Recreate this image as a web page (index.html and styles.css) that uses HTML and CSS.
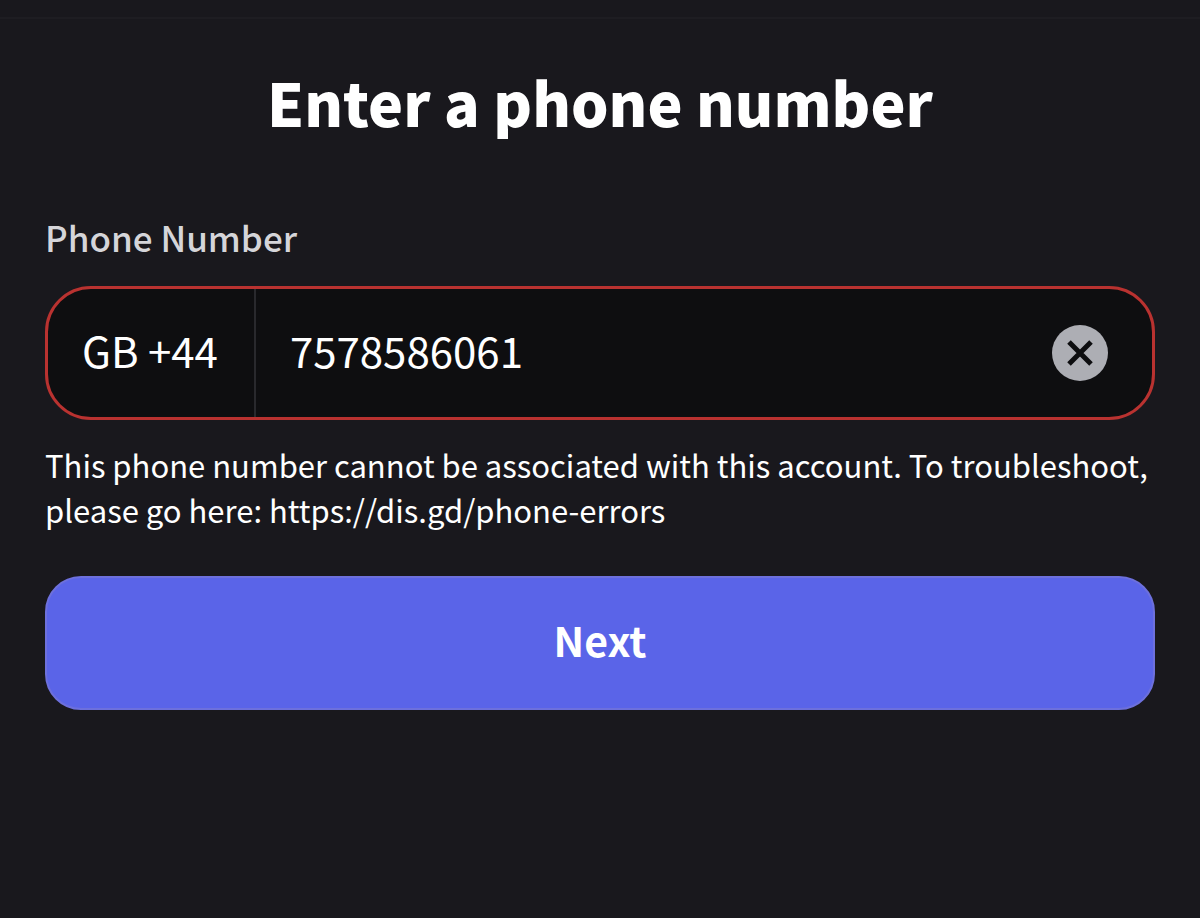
FILE: index.html
```
<!DOCTYPE html>
<html lang="en">
<head>
    <meta charset="UTF-8">
    <meta name="viewport" content="width=device-width, initial-scale=1.0">
    <title>Enter a phone number</title>
    <link rel="stylesheet" href="styles.css">
</head>
<body>
    <header class="topbar"></header>

    <main class="screen">
        <h1 class="title">Enter a phone number</h1>

        <form class="phone-form">
            <label class="label" for="phone">Phone Number</label>
            <div class="field">
                <button type="button" class="country">GB +44</button>
                <input type="tel" class="phone" id="phone" name="phone" value="7578586061" aria-describedby="phoneError">
                <button type="button" class="clear" aria-label="Clear">
                    <svg viewBox="0 0 56 56" width="56" height="56">
                        <circle cx="28" cy="28" r="28" fill="#adaeb4"/>
                        <path d="M17 17L39 39M39 17L17 39" stroke="#0d0d0f" stroke-width="5"/>
                    </svg>
                </button>
            </div>
            <p class="error" id="phoneError">This phone number cannot be associated with this account. To troubleshoot, please go here: https://dis.gd/phone-errors</p>
            <button type="submit" class="next">Next</button>
        </form>
    </main>
</body>
</html>
```
FILE: styles.css
```
* {
    box-sizing: border-box;
}
body {
    margin: 0;
    min-height: 100vh;
    background-color: #19181d;
    color: #fff;
    font-family: "Noto Sans CJK SC", "Noto Sans", sans-serif;
}
.topbar {
    height: 19px;
    border-bottom: 2px solid #1e1d22;
}
.screen {
    padding: 40px 45px;
}
.title {
    margin: 0;
    font-size: 59px;
    line-height: 86px;
    font-weight: 900;
    text-align: center;
}
.phone-form {
    display: flex;
    flex-direction: column;
    margin-top: 70px;
}
.label {
    color: #d5d5d9;
    font-size: 35px;
    line-height: 44px;
    font-weight: 500;
}
.field {
    display: flex;
    align-items: center;
    height: 134px;
    margin-top: 27px;
    padding-right: 44px;
    background-color: #0e0e10;
    border: 3px solid #b93230;
    border-radius: 46px;
    overflow: hidden;
}
button {
    border: none;
    cursor: pointer;
}
.country,
.phone {
    align-self: stretch;
    padding: 0 36px 8px 34px;
    background: none;
    color: #fff;
    font-family: inherit;
    font-size: 42px;
}
.country {
    border-right: 2px solid #29292d;
    white-space: nowrap;
}
.phone {
    flex: 1;
    min-width: 0;
    border: none;
    outline: none;
}
.clear {
    padding: 0;
    background: none;
}
.clear svg {
    display: block;
}
.error {
    margin: 22px 0 0;
    font-size: 31px;
    line-height: 45px;
}
.next {
    height: 134px;
    margin-top: 44px;
    padding: 0 0 8px;
    background-color: #5a64e8;
    border: 2px solid #6d70dc;
    border-radius: 36px;
    color: #fff;
    font-family: inherit;
    font-size: 41px;
    font-weight: 600;
}
```
